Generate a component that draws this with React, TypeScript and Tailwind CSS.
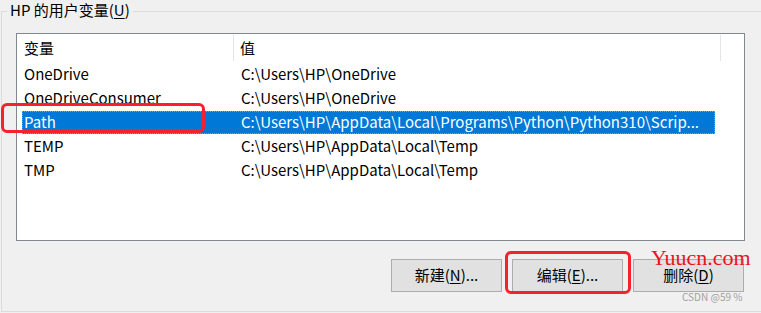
import React from 'react';

const rows = [
  { name: 'OneDrive', value: 'C:\\Users\\HP\\OneDrive' },
  { name: 'OneDriveConsumer', value: 'C:\\Users\\HP\\OneDrive' },
  { name: 'Path', value: 'C:\\Users\\HP\\AppData\\Local\\Programs\\Python\\Python310\\Scrip...', selected: true },
  { name: 'TEMP', value: 'C:\\Users\\HP\\AppData\\Local\\Temp' },
  { name: 'TMP', value: 'C:\\Users\\HP\\AppData\\Local\\Temp' },
];

const font = { fontFamily: '"Noto Sans CJK SC", "Noto Sans", sans-serif' };

function Btn({ label, hot, rest }: { label: string; hot: string; rest: string }) {
  return (
    <button className="w-[111px] h-[33px] bg-[#e1e1e1] border border-[#adadad] text-[15px] text-black flex items-center justify-center">
      {label}(<span className="underline underline-offset-2">{hot}</span>){rest}
    </button>
  );
}

export default function App() {
  return (
    <div className="w-[761px] h-[313px] bg-[#f0f0f0] relative overflow-hidden text-black" style={font}>
      {/* group box */}
      <div className="relative mt-[11px] ml-[1px] w-[770px] h-[301px] border border-[#dcdcdc]">
        <div className="absolute -top-[12px] left-[5px] px-[3px] bg-[#f0f0f0] text-[15px] leading-[20px]">
          HP 的用户变量(<span className="underline underline-offset-2">U</span>)
        </div>

        {/* list view */}
        <div className="ml-[14px] mt-[21px] w-[729px] h-[208px] bg-white border border-[#828790] flex flex-col">
          <div className="h-[28px] flex items-center text-[15px]">
            <div className="w-[217px] pl-[7px] h-[26px] flex items-center border-r border-[#e5e5e5]">变量</div>
            <div className="w-[487px] pl-[6px] h-[26px] flex items-center border-r border-[#e5e5e5]">值</div>
          </div>
          {rows.map((r) => (
            <div key={r.name} className="h-[24px] pl-[5px] flex items-center">
              <div
                className={
                  r.selected
                    ? 'w-[693px] h-[23px] flex items-center bg-[#0078d7] text-white outline outline-1 outline-dotted outline-[#f08a24] -outline-offset-1'
                    : 'w-[693px] h-[23px] flex items-center'
                }
              >
                <div className="w-[217px] pl-[2px] text-[15px] whitespace-nowrap">{r.name}</div>
                <div className="pl-[2px] text-[15px] whitespace-nowrap">{r.value}</div>
              </div>
            </div>
          ))}
        </div>

        {/* buttons */}
        <div className="ml-[389px] mt-[18px] flex gap-[10px]">
          <Btn label="新建" hot="N" rest="..." />
          <Btn label="编辑" hot="E" rest="..." />
          <Btn label="删除" hot="D" rest="" />
        </div>
      </div>

      {/* annotations */}
      <div className="absolute left-[1px] top-[103px] w-[204px] h-[30px] border-[3px] border-[#f5222d] rounded-[6px]" />
      <div className="absolute left-[505px] top-[251px] w-[126px] h-[43px] border-[3px] border-[#f5222d] rounded-[6px]" />
      <div
        className="absolute left-[651px] top-[246px] text-[22px] leading-[24px] text-[#e8141c]"
        style={{ fontFamily: '"Liberation Serif", serif' }}
      >
        Yuucn.com
      </div>
      <div className="absolute left-[682px] top-[291px] text-[10px] leading-[12px] text-[#a0a0a0]">CSDN @59 %</div>
    </div>
  );
}
